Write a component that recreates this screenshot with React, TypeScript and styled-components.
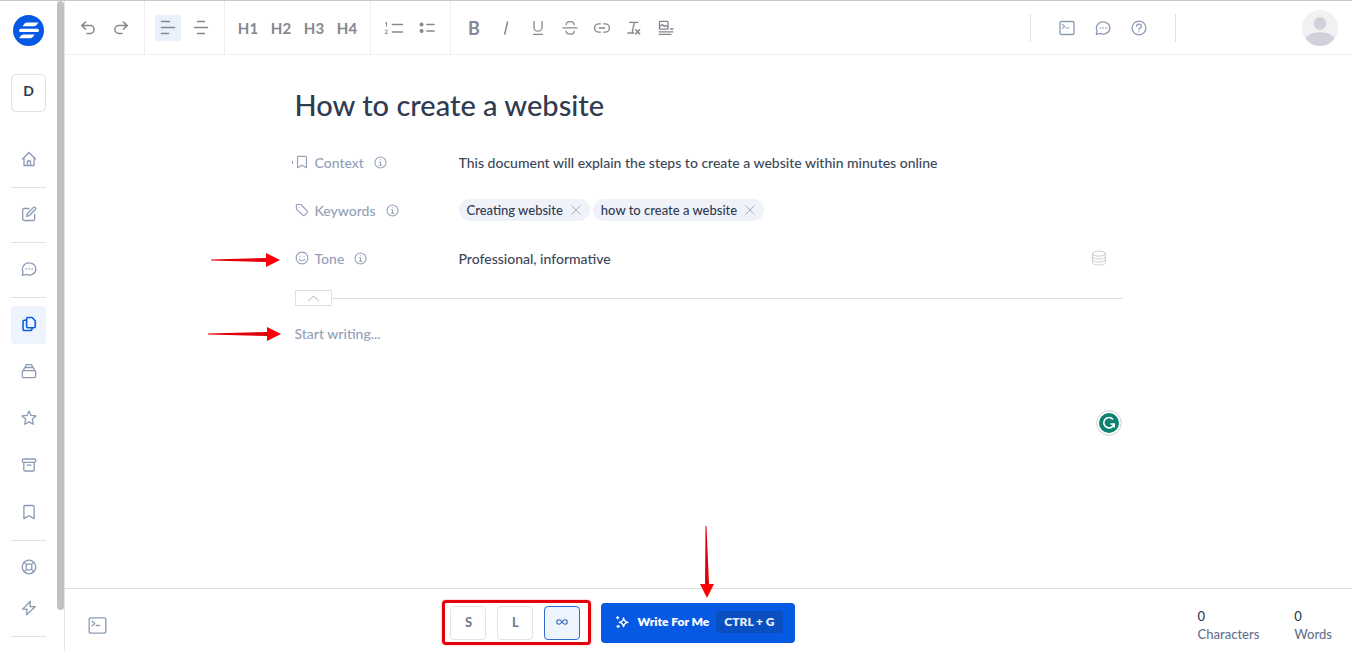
import React from 'react';
import styled, { createGlobalStyle, css } from 'styled-components';

const GlobalStyle = createGlobalStyle`
  *, *::before, *::after { box-sizing: border-box; }
  body {
    margin: 0;
    background: #fff;
    color: #2f3b50;
    font-family: Lato, "Liberation Sans", sans-serif;
    font-size: 14px;
    font-weight: 500;
  }
  button, input, textarea { font: inherit; color: inherit; }
`;

const Page = styled.div`
  display: flex;
  min-height: 100vh;
  border-top: 1px solid #c8c8c8;
`;

const Sidebar = styled.aside`
  display: flex;
  flex: none;
  width: 65px;
  border-right: 1px solid #e3e4e8;
`;

const SideContent = styled.div`
  display: flex;
  flex: 1;
  flex-direction: column;
  align-items: center;
  padding-top: 14px;
`;

const ScrollThumb = styled.div`
  flex: none;
  width: 7px;
  margin-bottom: 41px;
  border-radius: 4px;
  background: #c1c1c1;
`;

const LogoLink = styled.a`
  display: block;
  height: 31px;
`;

const Workspace = styled.button`
  width: 35px;
  height: 38px;
  margin: 28px 0 21px;
  padding: 0 0 5px;
  border: 1px solid #dfe1e6;
  border-radius: 5px;
  background: #fff;
  color: #2f3b50;
  font-size: 14px;
  font-weight: 700;
`;

const NavGroup = styled.nav<{ $gap?: number }>`
  display: flex;
  flex-direction: column;
  gap: ${({ $gap = 9 }) => $gap}px;
  width: 35px;
  padding: 8px 0;
  border-bottom: 1px solid #dfe1e6;
`;

const NavItem = styled.a<{ $active?: boolean }>`
  display: flex;
  align-items: center;
  justify-content: center;
  height: 38px;
  padding-bottom: 2px;
  border-radius: 4px;
  color: ${({ $active }) => ($active ? '#0a5be0' : '#8c9ab5')};
  background: ${({ $active }) => ($active ? '#eef4fe' : 'transparent')};
`;

const Main = styled.div`
  display: flex;
  flex: 1;
  flex-direction: column;
  min-width: 0;
`;

const Toolbar = styled.header`
  display: flex;
  flex: none;
  height: 54px;
  border-bottom: 1px solid #efeff2;
`;

const ToolGroup = styled.div<{ $gap?: number; $last?: boolean }>`
  display: flex;
  align-items: center;
  gap: ${({ $gap = 7 }) => $gap}px;
  padding: 0 10px;
  border-right: ${({ $last }) => ($last ? 'none' : '1px solid #efeff2')};
`;

const ToolButton = styled.button<{ $active?: boolean; $strong?: boolean }>`
  display: flex;
  align-items: center;
  justify-content: center;
  width: 26px;
  height: 26px;
  padding: 0;
  border: 0;
  border-radius: 3px;
  background: ${({ $active }) => ($active ? '#eaf1fd' : 'transparent')};
  color: #85888e;
  font-size: ${({ $strong }) => ($strong ? 18 : 15)}px;
  font-weight: 700;
`;

const HelpGroup = styled.div`
  display: flex;
  align-items: center;
  align-self: center;
  gap: 10px;
  height: 28px;
  margin-left: auto;
  padding: 0 23px;
  border: solid #dddfe6;
  border-width: 0 1px;
  button { color: #8c9ab5; }
`;

const AvatarButton = styled.button`
  align-self: center;
  width: 36px;
  height: 36px;
  margin: 0 14px 0 126px;
  padding: 0;
  border: 0;
  border-radius: 50%;
  background: none;
`;

const Editor = styled.main`
  flex: 1;
  width: 100%;
  max-width: 828px;
  margin: 0 auto;
  padding-top: 29px;
`;

const plainField = css`
  display: block;
  padding: 0;
  border: 0;
  outline: 0;
  background: transparent;
`;

const TitleInput = styled.input`
  ${plainField}
  width: 100%;
  height: 40px;
  margin-bottom: 14px;
  font-size: 29px;
`;

const FieldRow = styled.div`
  position: relative;
  display: flex;
  align-items: center;
  height: 48px;
`;

const FieldLabel = styled.div`
  display: flex;
  align-items: center;
  flex: none;
  width: 164px;
  color: #94a0b8;
  svg { flex: none; }
`;

const LabelText = styled.label`
  margin: 0 10px 0 6px;
`;

const InfoButton = styled.button`
  display: flex;
  padding: 0;
  border: 0;
  background: none;
  color: #94a0b8;
`;

const FieldInput = styled.input`
  ${plainField}
  flex: 1;
  min-width: 0;
  height: 24px;
  color: #3c4759;
`;

const Tags = styled.ul`
  display: flex;
  gap: 3px;
  margin: 0;
  padding: 0;
  list-style: none;
`;

const Tag = styled.li`
  display: flex;
  align-items: center;
  gap: 7px;
  height: 22px;
  padding: 0 8px;
  border-radius: 11px;
  background: #f0f2fa;
  color: #2f3b50;
  font-size: 13px;
`;

const IconButton = styled.button`
  display: flex;
  padding: 0;
  border: 0;
  background: none;
  color: #a9aeba;
`;

const PresetButton = styled(IconButton)`
  margin-right: 16px;
  color: #c9cbd0;
`;

const Collapse = styled.div`
  display: flex;
  align-items: center;
  height: 16px;
  margin: 8px 0 18px;
  &::after {
    content: '';
    flex: 1;
    height: 1px;
    background: #dddfe3;
  }
`;

const CollapseButton = styled.button`
  display: flex;
  align-items: center;
  justify-content: center;
  width: 37px;
  height: 16px;
  padding: 0;
  border: 1px solid #dddfe3;
  border-radius: 1px;
  background: #fff;
  color: #c3c6cf;
`;

const Writing = styled.div`
  position: relative;
`;

const TextArea = styled.textarea`
  ${plainField}
  width: 100%;
  height: 112px;
  line-height: 20px;
  resize: none;
  &::placeholder { color: #94a0b8; opacity: 1; }
`;

const Assistant = styled.button`
  position: absolute;
  right: 1px;
  bottom: 0;
  width: 26px;
  height: 26px;
  padding: 0;
  border: 0;
  background: none;
  svg { display: block; }
`;

const CaretMark = styled.span`
  position: absolute;
  left: -3px;
  top: 23px;
  width: 1px;
  height: 3px;
  background: #8b93a5;
`;

const SidePointer = styled.svg<{ $top: number; $right?: number }>`
  position: absolute;
  top: ${({ $top }) => $top}px;
  right: calc(100% + ${({ $right = 15 }) => $right}px);
`;

const Footer = styled.footer`
  display: grid;
  grid-template-columns: 1fr auto 1fr;
  align-items: center;
  flex: none;
  height: 63px;
  padding: 0 20px;
  border-top: 1px solid #dddfe3;
`;

const FooterTool = styled(IconButton)`
  margin: 11px 0 0 3px;
  color: #8c9ab5;
`;

const Actions = styled.div`
  position: relative;
  display: flex;
  align-items: center;
  gap: 10px;
  margin-right: 180px;
  padding-top: 5px;
`;

const Lengths = styled.div`
  display: flex;
  gap: 11px;
  padding: 3px 8px 2px 5px;
  border: 3px solid #e3000b;
  border-radius: 4px;
  box-shadow: 0 0 2px #f08a8a;
`;

const LengthButton = styled.button<{ $active?: boolean }>`
  display: flex;
  align-items: center;
  justify-content: center;
  width: 36px;
  height: 34px;
  padding: 0 0 2px;
  border: 1px solid ${({ $active }) => ($active ? '#2f6ad0' : '#e2e3ea')};
  border-radius: 4px;
  background: ${({ $active }) => ($active ? '#eef4fe' : '#fff')};
  color: ${({ $active }) => ($active ? '#2f5fc0' : '#6b7689')};
  font-size: 13px;
  font-weight: 700;
`;

const WriteButton = styled.button`
  display: flex;
  align-items: center;
  height: 40px;
  padding: 0 12px 2px 14px;
  border: 0;
  border-radius: 4px;
  background: #0559e3;
  color: #fff;
  font-size: 12px;
  font-weight: 800;
  white-space: nowrap;
  svg { margin-right: 8px; }
`;

const Shortcut = styled.kbd`
  margin-left: 7px;
  padding: 0 8px;
  border-radius: 3px;
  background: #0a4fc0;
  color: #e4ecfb;
  font: inherit;
  line-height: 22px;
`;

const DownPointer = styled.svg`
  position: absolute;
  left: 257px;
  bottom: 47px;
`;

const Stats = styled.dl`
  display: flex;
  justify-self: end;
  gap: 35px;
  margin: 9px 0 0;
`;

const Stat = styled.div`
  display: flex;
  flex-direction: column-reverse;
  font-size: 13px;
  line-height: 18px;
  dt { color: #66738c; }
  dd { margin: 0; color: #2f3b50; }
`;

const paths: Record<string, React.ReactNode> = {
  home: <><path d="M1.5 8 8 1.5 14.5 8" /><path d="M3 6.8v7.7h10V6.8M6.5 14.3V10h3v4.3" /></>,
  edit: <><path d="M8 2.5H3.2a1.5 1.5 0 0 0-1.5 1.5v9a1.5 1.5 0 0 0 1.5 1.5h9a1.5 1.5 0 0 0 1.5-1.5V8.5" /><path d="M12.3 1.6a1.3 1.3 0 0 1 2 1.9L8.2 9.7l-2.6.8.8-2.7z" /></>,
  chat: <><path d="M1.3 14.3 2 10.8A6.4 6.4 0 0 1 8.2 1.8a6.6 6 0 0 1 6.6 6 6.6 6 0 0 1-9.6 5.6z" /><path d="M5.2 8h.1M8.1 8h.1M11 8h.1" strokeWidth="1.6" /></>,
  copy: <><path d="M7 1.5h4.2L14.3 5v5.3a1.4 1.4 0 0 1-1.4 1.4H7a1.4 1.4 0 0 1-1.4-1.4V2.9A1.4 1.4 0 0 1 7 1.5Z" /><path d="M5.3 4.3H3.4A1.4 1.4 0 0 0 2 5.7v7.4a1.4 1.4 0 0 0 1.4 1.4h6.2a1.4 1.4 0 0 0 1.4-1.4v-1" /></>,
  stack: <><rect x="1.3" y="7.6" width="13.4" height="7" rx="1.4" /><path d="M2.3 7.500 3.700 4.500h8.600l1.400 3M4.500 4.300 5.200 1.700h5.600l.7 2.600" /></>,
  star: <path d="m8 1 2 4.400 5 .6-3.700 3.300 1 5L8 11.900l-4.300 2.400 1-5L1 6l5-.6z" />,
  archive: <><rect x="1.3" y="2" width="13.4" height="3.3" rx="1" /><path d="M2.8 5.5v7.3a1.2 1.2 0 0 0 1.2 1.2h8a1.2 1.2 0 0 0 1.2-1.2V5.5M6.2 8.2h3.6" /></>,
  bookmark: <path d="M3.8 1.5h8.4a.9.9 0 0 1 .9.9v12.2L8 11.7l-5.1 2.9V2.4a.9.9 0 0 1 .9-.9Z" />,
  buoy: <><circle cx="8" cy="8" r="6.8" /><rect x="5.2" y="5.2" width="5.6" height="5.6" rx="1.5" /><path d="m3.2 3.2 2.4 2.4m4.8 4.8 2.4 2.4m0-9.6-2.4 2.4m-4.8 4.8-2.4 2.4" /></>,
  zap: <path d="M9.3 1.2 1.6 9.1h4.5l-.6 5.7 8.9-8.2H9z" />,
  undo: <path d="M5.6 2 1.800 5.600l3.800 3.600M2 5.600h8.200a3.900 3.900 0 0 1 0 7.800H7" />,
  redo: <path d="M10.400 2 14.200 5.600l-3.800 3.600M14 5.600H5.800a3.900 3.900 0 0 0 0 7.800H9" />,
  left: <path d="M1.5 1.500h8M1.5 7.500h13M1.5 13.500h7" />,
  center: <path d="M4.5 1.500h7M1.5 7.500h13M4.5 13.500h7" />,
  italic: <path d="M9.5 2 6.8 14" />,
  underline: <path d="M4 1.5v5.7a4 4 0 0 0 8 0V1.5M3.5 14.3h9" />,
  strike: <path d="M12.200 4.600C11.800 2.700 10.200 1.700 8 1.700S4.300 2.800 4.300 4.600M1 7.800h14M12.200 11.200c0 1.900-1.600 3-4 3-2.300 0-3.900-1-4.300-3" />,
  link: <path d="M6.3 3.8H4.8a4.2 4.2 0 0 0 0 8.4h1.500M9.700 3.800h1.500a4.200 4.200 0 0 1 0 8.400H9.700M5.300 8h5.400" />,
  clear: <><path d="M3.5 2.300h8.300M8.300 2.500 6.300 12M1.800 13h6" /><path d="m9.800 9.800 3.800 4M13.600 9.800l-3.800 4" strokeWidth="1.6" /></>,
  image: <><rect x="1.500" y="1.300" width="8.500" height="7.900" rx=".5" /><path d="m1.800 6.500 2.500-2 2 2 1.400-1.200L9.800 7M12.500 9h2.500M1 11.800h14M1 14.400h12" /></>,
  terminal: <><rect x="1" y="1.500" width="14" height="13" rx="1.200" /><path d="m3.500 4.500 2.200 1.900-2.200 1.900M7 8h2.800" strokeWidth="1.100" /></>,
  help: <><circle cx="8" cy="8" r="6.900" /><path d="M5.600 6.300c.1-1.400 1-2.200 2.400-2.200s2.400.8 2.400 2.100c0 1.800-2.400 1.800-2.400 3.400M8 11.700v.1" /></>,
  tag: <><path d="M1.500 1.700h5.300l7.400 7.500a1 1 0 0 1 0 1.400l-3.600 3.600a1 1 0 0 1-1.400 0L1.700 7z" /><path d="M4.500 4.700h.1" /></>,
  smile: <><circle cx="8" cy="8" r="6.700" /><path d="M5.700 5.900v.3M10.300 5.900v.3M4.800 9.400c1.500 2.300 4.900 2.300 6.400 0" /></>,
  info: <><circle cx="8" cy="8" r="6.800" /><path d="M8 4.500v.2M6.900 7.300H8v3.800M6.500 11.300h3" /></>,
  close: <path d="m2 2 12 12M14 2 2 14" />,
  database: <><ellipse cx="8" cy="3.600" rx="6.500" ry="2.500" /><path d="M1.500 3.600v8.800C1.500 13.800 4.400 15 8 15s6.500-1.200 6.500-2.600V3.600M1.500 6.500C1.500 7.900 4.400 9 8 9s6.500-1.100 6.500-2.500M1.500 9.500C1.500 10.900 4.400 12 8 12s6.500-1.100 6.500-2.500" /></>,
  up: <path d="m1.500 11 6.500-6 6.500 6" />,
  sparkle: <><path d="M9.800 3.200c.5 3.200 1.600 4.500 4.900 5.100-3.300.6-4.400 1.900-4.900 5.100-.5-3.200-1.600-4.500-4.900-5.100 3.300-.6 4.400-1.900 4.900-5.100Z" /><path d="M3 1.800v2.600M1.700 3.100h2.600M3.600 11.800v2.600M2.300 13.100h2.600" /></>,
  infinity: <path d="M8 8C6.500 5.800 5.300 5 4 5a3 3 0 0 0 0 6c1.300 0 2.500-.8 4-3s2.700-3 4-3a3 3 0 0 1 0 6c-1.300 0-2.500-.8-4-3Z" />,
};

function Icon({ name, size = 16, weight = 1.3 }: { name: string; size?: number; weight?: number }) {
  return (
    <svg width={size} height={size} viewBox="0 0 16 16" fill="none" stroke="currentColor"
      strokeWidth={weight} strokeLinecap="round" strokeLinejoin="round" aria-hidden="true">
      {paths[name]}
    </svg>
  );
}

function Tool({ name, label, active, weight }: { name: string; label: string; active?: boolean; weight?: number }) {
  return (
    <ToolButton type="button" aria-label={label} $active={active}>
      <Icon name={name} weight={weight} />
    </ToolButton>
  );
}

function Field({ id, icon, label, children }: { id: string; icon: string; label: string; children: React.ReactNode }) {
  return (
    <FieldRow>
      <FieldLabel>
        <Icon name={icon} size={14} />
        <LabelText htmlFor={id}>{label}</LabelText>
        <InfoButton type="button" aria-label={`About ${label}`}><Icon name="info" size={13} /></InfoButton>
      </FieldLabel>
      {children}
    </FieldRow>
  );
}

function Pointer({ top, right, length }: { top: number; right?: number; length: number }) {
  return (
    <SidePointer $top={top} $right={right} width={length} height="16" viewBox={`0 0 ${length} 16`} aria-hidden="true">
      <path d={`M0 7.5 ${length - 14} 6v4L0 8.5Z`} fill="#e3000b" />
      <path d={`M${length - 14} 1 ${length} 8l-${14} 7Z`} fill="#fb0007" />
    </SidePointer>
  );
}

const documentNav = [
  ['copy', 'Documents'], ['stack', 'Collections'], ['star', 'Favorites'], ['archive', 'Archive'], ['bookmark', 'Saved'],
];

export default function App() {
  return (
    <>
      <GlobalStyle />
      <Page>
        <Sidebar>
          <SideContent>
            <LogoLink href="#" aria-label="Dashboard">
              <svg width="31" height="31" viewBox="0 0 31 31" aria-hidden="true">
                <circle cx="15.5" cy="15.5" r="15.5" fill="#0559e3" />
                <g fill="#fff">
                  <path d="M14.500 7.500h10.800c-1 2.300-2.600 3.700-5 3.700H9.800c.9-2.300 2.300-3.700 4.700-3.700Z" />
                  <rect x="6" y="13.800" width="20" height="3.200" rx="1.600" />
                  <path d="M11 19.600h10.500c-1 2.300-2.500 3.700-4.900 3.700H6.200c1-2.300 2.400-3.700 4.800-3.700Z" />
                </g>
              </svg>
            </LogoLink>
            <Workspace type="button">D</Workspace>
            <NavGroup><NavItem href="#" aria-label="Home"><Icon name="home" /></NavItem></NavGroup>
            <NavGroup><NavItem href="#" aria-label="New document"><Icon name="edit" /></NavItem></NavGroup>
            <NavGroup><NavItem href="#" aria-label="Chat"><Icon name="chat" /></NavItem></NavGroup>
            <NavGroup>
              {documentNav.map(([name, label], i) => (
                <NavItem key={name} href="#" aria-label={label} $active={i === 0}>
                  <Icon name={name} weight={i === 0 ? 1.6 : 1.3} />
                </NavItem>
              ))}
            </NavGroup>
            <NavGroup $gap={3}>
              <NavItem href="#" aria-label="Support"><Icon name="buoy" /></NavItem>
              <NavItem href="#" aria-label="Updates"><Icon name="zap" /></NavItem>
            </NavGroup>
          </SideContent>
          <ScrollThumb />
        </Sidebar>

        <Main>
          <Toolbar>
            <ToolGroup>
              <Tool name="undo" label="Undo" weight={1.5} />
              <Tool name="redo" label="Redo" weight={1.5} />
            </ToolGroup>
            <ToolGroup>
              <Tool name="left" label="Align left" active weight={1.5} />
              <Tool name="center" label="Align center" weight={1.5} />
            </ToolGroup>
            <ToolGroup>
              {['H1', 'H2', 'H3', 'H4'].map((h) => <ToolButton key={h} type="button">{h}</ToolButton>)}
            </ToolGroup>
            <ToolGroup>
              <ToolButton type="button" aria-label="Numbered list">
                <svg width="20" height="16" viewBox="0 0 20 16" fill="none" stroke="currentColor" strokeLinecap="round" aria-hidden="true">
                  <path d="M8.5 4.5h10M8.5 12h10" strokeWidth="1.6" />
                  <path d="m1.5 3 1-.8v4M1.3 10.4c.5-.8 2-.7 2 .3 0 .8-2 2-2 2.7h2.200" />
                </svg>
              </ToolButton>
              <ToolButton type="button" aria-label="Bulleted list">
                <svg width="16" height="16" viewBox="0 0 16 16" fill="none" stroke="currentColor" strokeLinecap="round" aria-hidden="true">
                  <path d="M8 4.500h7M8 11h7" strokeWidth="1.5" />
                  <path d="M2.500 4.500h.1M2.500 11h.1" strokeWidth="4" />
                </svg>
              </ToolButton>
            </ToolGroup>
            <ToolGroup $gap={6} $last>
              <ToolButton type="button" aria-label="Bold" $strong>B</ToolButton>
              <Tool name="italic" label="Italic" weight={1.5} />
              <Tool name="underline" label="Underline" />
              <Tool name="strike" label="Strikethrough" />
              <Tool name="link" label="Link" />
              <Tool name="clear" label="Clear formatting" />
              <Tool name="image" label="Image" />
            </ToolGroup>
            <HelpGroup>
              <Tool name="terminal" label="Command" />
              <Tool name="chat" label="Messages" />
              <Tool name="help" label="Help" />
            </HelpGroup>
            <AvatarButton type="button" aria-label="Account">
              <svg width="36" height="36" viewBox="0 0 36 36" aria-hidden="true">
                <circle cx="18" cy="18" r="18" fill="#f1f1f2" />
                <circle cx="18" cy="13.5" r="6.3" fill="#d1d1dc" />
                <path d="M3.300 28.300C6 24.300 11.500 22.300 18 22.300s12 2 14.700 6A18 18 0 0 1 3.300 28.300Z" fill="#d1d1dc" />
              </svg>
            </AvatarButton>
          </Toolbar>

          <Editor>
            <TitleInput aria-label="Title" defaultValue="How to create a website" />
            <Field id="context" icon="bookmark" label="Context">
              <FieldInput id="context" defaultValue="This document will explain the steps to create a website within minutes online" />
              <CaretMark />
            </Field>
            <Field id="keywords" icon="tag" label="Keywords">
              <Tags>
                {['Creating website', 'how to create a website'].map((tag) => (
                  <Tag key={tag}>
                    {tag}
                    <IconButton type="button" aria-label={`Remove ${tag}`}><Icon name="close" size={12} /></IconButton>
                  </Tag>
                ))}
              </Tags>
              <FieldInput id="keywords" />
            </Field>
            <Field id="tone" icon="smile" label="Tone">
              <FieldInput id="tone" defaultValue="Professional, informative" />
              <PresetButton type="button" aria-label="Tone presets"><Icon name="database" weight={1} /></PresetButton>
              <Pointer top={18} length={69} />
            </Field>
            <Collapse>
              <CollapseButton type="button" aria-label="Collapse details"><Icon name="up" size={13} /></CollapseButton>
            </Collapse>
            <Writing>
              <TextArea aria-label="Document" placeholder="Start writing..." />
              <Pointer top={2} right={14} length={73} />
              <Assistant type="button" aria-label="Writing assistant">
                <svg width="26" height="26" viewBox="0 0 26 26" fill="none" aria-hidden="true">
                  <circle cx="13" cy="13" r="12.3" fill="#fff" stroke="#cfcfd4" />
                  <circle cx="13" cy="13" r="10" fill="#0b8270" />
                  <path d="M17 9.400A5.200 5.200 0 1 0 18 14h-3.500M18.200 13.700v3.800" stroke="#fff" strokeWidth="1.6" />
                </svg>
              </Assistant>
            </Writing>
          </Editor>

          <Footer>
            <div>
              <FooterTool type="button" aria-label="Open commands"><Icon name="terminal" size={19} weight={1.1} /></FooterTool>
            </div>
            <Actions>
              <Lengths>
                <LengthButton type="button">S</LengthButton>
                <LengthButton type="button">L</LengthButton>
                <LengthButton type="button" aria-label="Unlimited" $active><Icon name="infinity" size={12} weight={1.4} /></LengthButton>
              </Lengths>
              <WriteButton type="button">
                <Icon name="sparkle" size={14} weight={1.5} />
                Write For Me
                <Shortcut>CTRL + G</Shortcut>
              </WriteButton>
              <DownPointer width="16" height="72" viewBox="0 0 16 72" aria-hidden="true">
                <path d="M6.5 0h1L10 58H6Z" fill="#e3000b" />
                <path d="M1 58h14L8 72Z" fill="#fb0007" />
              </DownPointer>
            </Actions>
            <Stats>
              <Stat><dt>Characters</dt><dd>0</dd></Stat>
              <Stat><dt>Words</dt><dd>0</dd></Stat>
            </Stats>
          </Footer>
        </Main>
      </Page>
    </>
  );
}
